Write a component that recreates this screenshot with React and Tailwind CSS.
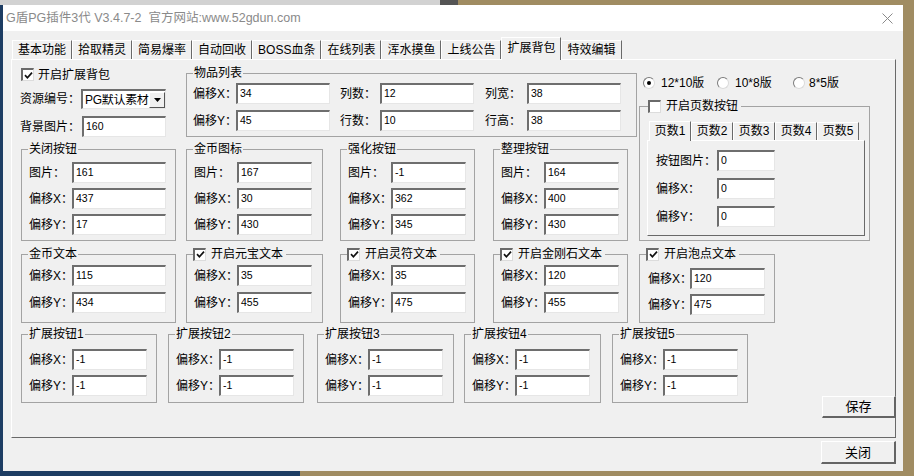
import React from 'react';

const Check = ({ checked }) => (
  <span className="w-[13px] h-[13px] shrink-0 bg-white border-t-2 border-l-2 border-t-[#6a6a6a] border-l-[#6a6a6a] border-b border-r border-b-[#dcdcdc] border-r-[#dcdcdc] flex items-center justify-center">
    {checked && (
      <svg width="9" height="9" viewBox="0 0 9 9">
        <path d="M1 4.2 L3.4 6.8 L8 1.6" stroke="#111" strokeWidth="1.7" fill="none" />
      </svg>
    )}
  </span>
);

const Radio = ({ checked }) => (
  <span className="w-[12px] h-[12px] shrink-0 rounded-full bg-white border border-t-[#7a7a7a] border-l-[#7a7a7a] border-b-[#dadada] border-r-[#dadada] flex items-center justify-center">
    {checked && <span className="w-[4px] h-[4px] rounded-full bg-black" />}
  </span>
);

const Input = ({ value, w }) => (
  <div className={`${w} h-[21px] shrink-0 bg-white border-t-2 border-l-2 border-t-[#6e6e6e] border-l-[#6e6e6e] border-b border-r border-b-[#e6e6e6] border-r-[#e6e6e6] pl-[2px] pb-[2px] flex items-center text-[10.5px] leading-none`}>
    {value}
  </div>
);

const Field = ({ label, value, lw = 'w-[43px]', iw = 'w-[75px]' }) => (
  <div className="flex items-center">
    <span className={`${lw} shrink-0 leading-none whitespace-nowrap`}>{label}</span>
    <Input value={value} w={iw} />
  </div>
);

const Group = ({ title, check, className, children }) => (
  <fieldset className={`border border-[#a3a3a3] shrink-0 ${className}`}>
    <legend className={`${check ? 'ml-[6px]' : 'ml-[6px] px-[1px]'} h-[16px] leading-[16px] whitespace-nowrap`}>
      {check ? (
        <span className="inline-flex items-center gap-[5px] pr-[3px]">
          <Check checked />
          {title}
        </span>
      ) : (
        title
      )}
    </legend>
    {children}
  </fieldset>
);

const Tab = ({ label, active }) =>
  active ? (
    <div className="h-[23px] -mb-px relative z-10 bg-[#f0f0f0] px-[5px] pt-[4px] border-t border-l border-white border-r border-r-[#696969] leading-none whitespace-nowrap">
      {label}
    </div>
  ) : (
    <div className="h-[19px] px-[5px] pt-[3px] border-t border-l border-white border-r border-r-[#696969] leading-none whitespace-nowrap">
      {label}
    </div>
  );

const SmallTab = ({ label, active }) => (
  <div
    className={`${active ? 'h-[20px] -mb-px relative z-10 bg-[#f0f0f0] pt-[3px]' : 'h-[18px] pt-[2px]'} w-[42px] text-center border-t border-l border-white border-r border-r-[#696969] leading-none whitespace-nowrap`}
  >
    {label}
  </div>
);

const tabs = ['基本功能', '拾取精灵', '简易爆率', '自动回收', 'BOSS血条', '在线列表', '浑水摸鱼', '上线公告', '扩展背包', '特效编辑'];

export default function App() {
  return (
    <div className="w-[914px] h-[476px] overflow-hidden flex flex-col bg-[linear-gradient(to_right,#1d3d63_0,#1d3d63_300px,#a08c62_300px)] font-['Liberation_Sans','Noto_Sans_CJK_SC',sans-serif] text-[12px] text-black">
      <div className="h-[5px] shrink-0 bg-[linear-gradient(to_right,#d2d2d2_0,#d2d2d2_440px,#555_440px,#555_458px,#a08c62_458px)]" />
      <div className="ml-[3px] w-[900px] h-[466px] flex flex-col bg-[#f0f0f0]">
        {/* title bar */}
        <div className="h-[26px] shrink-0 bg-white flex items-center pl-[3px] pr-[10px]">
          <span className="text-[12.5px] text-[#8a8a8a] whitespace-pre">G盾PG插件3代 V3.4.7-2  官方网站:www.52gdun.com</span>
          <svg className="ml-auto" width="11" height="11" viewBox="0 0 11 11">
            <path d="M0.5 0.5 L10.5 10.5 M10.5 0.5 L0.5 10.5" stroke="#8a8a8a" strokeWidth="1" />
          </svg>
        </div>

        <div className="flex-1 flex flex-col pt-[6px] pl-[8px] pr-[7px]">
          {/* tabs */}
          <div className="h-[22px] shrink-0 flex items-end pl-px">
            {tabs.map((t) => (
              <Tab key={t} label={t} active={t === '扩展背包'} />
            ))}
          </div>

          {/* tab panel */}
          <div className="h-[379px] shrink-0 border-t border-l border-white border-b border-r border-b-[#696969] border-r-[#696969] pl-[9px] pt-[5px] flex flex-col">
            <div className="flex items-start">
              {/* left area */}
              <div className="w-[618px] shrink-0 flex flex-col">
                <div className="flex items-start">
                  <div className="w-[165px] shrink-0 flex flex-col">
                    <div className="mt-[3px] h-[13px] flex items-center gap-[4px]">
                      <Check checked />
                      <span className="leading-none">开启扩展背包</span>
                    </div>
                    <div className="mt-[8px] flex items-center -ml-px">
                      <span className="w-[61px] shrink-0 leading-none whitespace-nowrap">资源编号：</span>
                      <div className="w-[85px] h-[20px] bg-white border-t-2 border-l-2 border-t-[#6e6e6e] border-l-[#6e6e6e] border-b border-r border-b-[#e6e6e6] border-r-[#e6e6e6] flex items-center pl-[2px]">
                        <span className="flex-1 leading-none whitespace-nowrap overflow-hidden tracking-[-0.3px]">PG默认素材</span>
                        <div className="w-[16px] h-[16px] shrink-0 bg-[#f0f0f0] border border-t-white border-l-white border-b-[#555] border-r-[#555] flex items-center justify-center">
                          <svg width="7" height="4" viewBox="0 0 7 4">
                            <path d="M0 0 L7 0 L3.5 4 Z" fill="#000" />
                          </svg>
                        </div>
                      </div>
                    </div>
                    <div className="mt-[7px] flex items-center -ml-px">
                      <span className="w-[62px] shrink-0 leading-none whitespace-nowrap">背景图片：</span>
                      <Input value="160" w="w-[84px]" />
                    </div>
                  </div>

                  <Group title="物品列表" className="w-[451px] h-[72px]">
                    <div className="pl-[6px] pt-[2px] flex flex-col gap-[6px]">
                      <div className="flex items-center">
                        <Field label="偏移X：" value="34" iw="w-[94px]" />
                        <span className="ml-[10px] w-[40px] leading-none">列数：</span>
                        <Input value="12" w="w-[94px]" />
                        <span className="ml-[11px] w-[42px] leading-none">列宽：</span>
                        <Input value="38" w="w-[94px]" />
                      </div>
                      <div className="flex items-center">
                        <Field label="偏移Y：" value="45" iw="w-[94px]" />
                        <span className="ml-[10px] w-[40px] leading-none">行数：</span>
                        <Input value="10" w="w-[94px]" />
                        <span className="ml-[11px] w-[42px] leading-none">行高：</span>
                        <Input value="38" w="w-[94px]" />
                      </div>
                    </div>
                  </Group>
                </div>

                <div className="mt-[4px] flex items-start">
                  <Group title="关闭按钮" className="w-[155px] h-[100px]">
                    <div className="pl-[7px] pt-[5px] flex flex-col gap-[5px]">
                      <Field label="图片：" value="161" iw="w-[94px]" />
                      <Field label="偏移X：" value="437" iw="w-[94px]" />
                      <Field label="偏移Y：" value="17" iw="w-[94px]" />
                    </div>
                  </Group>
                  <Group title="金币图标" className="ml-[10px] w-[137px] h-[100px]">
                    <div className="pl-[7px] pt-[5px] flex flex-col gap-[5px]">
                      <Field label="图片：" value="167" />
                      <Field label="偏移X：" value="30" />
                      <Field label="偏移Y：" value="430" />
                    </div>
                  </Group>
                  <Group title="强化按钮" className="ml-[17px] w-[135px] h-[100px]">
                    <div className="pl-[7px] pt-[5px] flex flex-col gap-[5px]">
                      <Field label="图片：" value="-1" />
                      <Field label="偏移X：" value="362" />
                      <Field label="偏移Y：" value="345" />
                    </div>
                  </Group>
                  <Group title="整理按钮" className="ml-[18px] w-[135px] h-[100px]">
                    <div className="pl-[7px] pt-[5px] flex flex-col gap-[5px]">
                      <Field label="图片：" value="164" />
                      <Field label="偏移X：" value="400" />
                      <Field label="偏移Y：" value="430" />
                    </div>
                  </Group>
                </div>
              </div>

              {/* right area */}
              <div className="flex flex-col">
                <div className="mt-[11px] h-[14px] pl-[4px] flex items-center">
                  <div className="w-[74px] flex items-center gap-[6px]">
                    <Radio checked />
                    <span className="leading-none">12*10版</span>
                  </div>
                  <div className="w-[76px] flex items-center gap-[6px]">
                    <Radio />
                    <span className="leading-none">10*8版</span>
                  </div>
                  <div className="flex items-center gap-[4px]">
                    <Radio />
                    <span className="leading-none">8*5版</span>
                  </div>
                </div>
                <fieldset className="mt-[8px] w-[231px] h-[143px] border border-[#a3a3a3]">
                  <legend className="ml-[8px] h-[16px] leading-[16px] whitespace-nowrap">
                    <span className="inline-flex items-center gap-[5px] pr-[3px]">
                      <Check />
                      开启页数按钮
                    </span>
                  </legend>
                  <div className="pl-[7px] pt-[7px] flex flex-col">
                    <div className="h-[19px] pl-[2px] flex items-end">
                      <SmallTab label="页数1" active />
                      <SmallTab label="页数2" />
                      <SmallTab label="页数3" />
                      <SmallTab label="页数4" />
                      <SmallTab label="页数5" />
                    </div>
                    <div className="w-[218px] h-[96px] border-t border-l border-white border-b border-r border-b-[#696969] border-r-[#696969] pl-[8px] pt-[9px] flex flex-col gap-[7px]">
                      <Field label="按钮图片：" value="0" lw="w-[61px]" iw="w-[58px]" />
                      <Field label="偏移X：" value="0" lw="w-[61px]" iw="w-[58px]" />
                      <Field label="偏移Y：" value="0" lw="w-[61px]" iw="w-[58px]" />
                    </div>
                  </div>
                </fieldset>
              </div>
            </div>

            {/* text row */}
            <div className="mt-[5px] flex items-start">
              <Group title="金币文本" className="w-[155px] h-[77px]">
                <div className="pl-[7px] pt-[3px] flex flex-col gap-[6px]">
                  <Field label="偏移X：" value="115" iw="w-[94px]" />
                  <Field label="偏移Y：" value="434" iw="w-[94px]" />
                </div>
              </Group>
              <Group title="开启元宝文本" check className="ml-[10px] w-[137px] h-[77px]">
                <div className="pl-[7px] pt-[3px] flex flex-col gap-[6px]">
                  <Field label="偏移X：" value="35" />
                  <Field label="偏移Y：" value="455" />
                </div>
              </Group>
              <Group title="开启灵符文本" check className="ml-[17px] w-[135px] h-[77px]">
                <div className="pl-[7px] pt-[3px] flex flex-col gap-[6px]">
                  <Field label="偏移X：" value="35" />
                  <Field label="偏移Y：" value="475" />
                </div>
              </Group>
              <Group title="开启金刚石文本" check className="ml-[18px] w-[135px] h-[77px]">
                <div className="pl-[7px] pt-[3px] flex flex-col gap-[6px]">
                  <Field label="偏移X：" value="120" />
                  <Field label="偏移Y：" value="455" />
                </div>
              </Group>
              <Group title="开启泡点文本" check className="ml-[11px] w-[136px] h-[77px]">
                <div className="pl-[8px] pt-[6px] flex flex-col gap-[5px]">
                  <Field label="偏移X：" value="120" lw="w-[42px]" />
                  <Field label="偏移Y：" value="475" lw="w-[42px]" />
                </div>
              </Group>
            </div>

            {/* extension buttons row */}
            <div className="mt-[3px] flex items-start">
              <Group title="扩展按钮1" className="w-[136px] h-[77px]">
                <div className="pl-[7px] pt-[7px] flex flex-col gap-[5px]">
                  <Field label="偏移X：" value="-1" />
                  <Field label="偏移Y：" value="-1" />
                </div>
              </Group>
              <Group title="扩展按钮2" className="ml-[11px] w-[136px] h-[77px]">
                <div className="pl-[7px] pt-[7px] flex flex-col gap-[5px]">
                  <Field label="偏移X：" value="-1" />
                  <Field label="偏移Y：" value="-1" />
                </div>
              </Group>
              <Group title="扩展按钮3" className="ml-[13px] w-[137px] h-[77px]">
                <div className="pl-[7px] pt-[7px] flex flex-col gap-[5px]">
                  <Field label="偏移X：" value="-1" />
                  <Field label="偏移Y：" value="-1" />
                </div>
              </Group>
              <Group title="扩展按钮4" className="ml-[10px] w-[137px] h-[77px]">
                <div className="pl-[7px] pt-[7px] flex flex-col gap-[5px]">
                  <Field label="偏移X：" value="-1" />
                  <Field label="偏移Y：" value="-1" />
                </div>
              </Group>
              <Group title="扩展按钮5" className="ml-[11px] w-[136px] h-[77px]">
                <div className="pl-[7px] pt-[7px] flex flex-col gap-[5px]">
                  <Field label="偏移X：" value="-1" />
                  <Field label="偏移Y：" value="-1" />
                </div>
              </Group>
              <button className="ml-auto -mr-px mt-[70px] w-[74px] h-[22px] bg-[#f0f0f0] border border-t-white border-l-white border-b-2 border-r-2 border-b-[#646464] border-r-[#646464] text-[13px] leading-none">
                保存
              </button>
            </div>
          </div>

          <button className="mt-[3px] self-end w-[75px] h-[23px] bg-[#f0f0f0] border border-t-white border-l-white border-b-2 border-r-2 border-b-[#646464] border-r-[#646464] text-[13px] leading-none">
            关闭
          </button>
        </div>
      </div>
    </div>
  );
}
